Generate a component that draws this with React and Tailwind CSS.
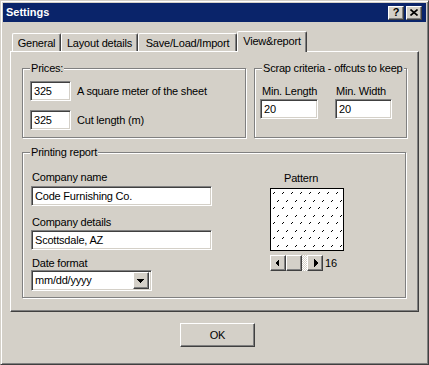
// Settings dialog, View&report tab (Windows 2000 look)

const raised =
  'border border-t-white border-l-white border-r-[#404040] border-b-[#404040] shadow-[inset_-1px_-1px_0_#808080] bg-[#d4d0c8]';
const sunken =
  'border border-t-[#808080] border-l-[#808080] border-r-white border-b-white shadow-[inset_1px_1px_0_#404040,inset_-1px_-1px_0_#d4d0c8] bg-white';
const etched =
  'border border-[#808080] shadow-[inset_1px_1px_0_#fff,1px_1px_0_#fff]';

const TextBox = ({ value, className }) => (
  <div className={`${sunken} h-[20px] flex items-center pl-[3px] ${className}`}>{value}</div>
);

const Arrow = ({ dir }) => (
  <svg width="8" height="8" viewBox="0 0 8 8" shapeRendering="crispEdges" className="block">
    {dir === 'left' && <polygon points="5,0 5,8 1,4" fill="#000" />}
    {dir === 'right' && <polygon points="3,0 3,8 7,4" fill="#000" />}
    {dir === 'down' && <polygon points="0,2 7,2 3.5,6" fill="#000" />}
  </svg>
);

const Tab = ({ label, width }) => (
  <div
    className={`h-[18px] ${width} flex justify-center pt-[3px] border-l border-t border-l-white border-t-white border-r border-r-[#404040] shadow-[inset_-1px_0_0_#808080] rounded-t-[2px] whitespace-nowrap`}
  >
    {label}
  </div>
);

export default function App() {
  return (
    <div className="w-[429px] h-[365px] bg-[#d4d0c8] border border-t-[#d4d0c8] border-l-[#d4d0c8] border-r-[#404040] border-b-[#404040] shadow-[inset_1px_1px_0_#fff,inset_-1px_-1px_0_#808080] p-[2px] flex flex-col font-['Liberation_Sans',Arial,sans-serif] text-[11px] leading-[13px] tracking-[-0.2px] text-black">
      {/* Title bar */}
      <div className="h-[19px] shrink-0 bg-[#0a246a] flex items-center pl-[3px] pr-[4px]">
        <span className="text-white font-bold text-[11px] tracking-normal">Settings</span>
        <div className="ml-auto flex gap-[2px]">
          <div className={`${raised} w-[16px] h-[14px] flex items-center justify-center font-bold text-[11px] leading-none`}>
            ?
          </div>
          <div className={`${raised} w-[16px] h-[14px] flex items-center justify-center`}>
            <svg width="8" height="7" viewBox="0 0 8 7">
              <path d="M0.5 0.5L7.5 6.5M7.5 0.5L0.5 6.5" stroke="#000" strokeWidth="1.6" />
            </svg>
          </div>
        </div>
      </div>

      {/* Tabs */}
      <div className="mt-[9px] h-[20px] shrink-0 flex items-end pl-[9px] relative z-10">
        <Tab label="General" width="w-[49px]" />
        <Tab label="Layout details" width="w-[77px]" />
        <Tab label="Save/Load/Import" width="w-[99px]" />
        <div className="h-[21px] w-[70px] -mb-[1px] bg-[#d4d0c8] flex justify-center pt-[3px] border-l border-t border-l-white border-t-white border-r border-r-[#404040] shadow-[inset_-1px_0_0_#808080] rounded-t-[2px] whitespace-nowrap">
          View&amp;report
        </div>
      </div>

      {/* Tab panel */}
      <div className={`${raised} ml-[7px] w-[409px] h-[261px] shrink-0 pt-[10px] pl-[11px]`}>
        <div className="flex gap-[8px]">
          <fieldset className={`${etched} w-[224px] pl-[7px] pb-[7px]`}>
            <legend className="px-[1px] bg-[#d4d0c8]">Prices:</legend>
            <div className="mt-[6px] flex items-center">
              <TextBox value="325" className="w-[41px]" />
              <span className="ml-[6px]">A square meter of the sheet</span>
            </div>
            <div className="mt-[9px] flex items-center">
              <TextBox value="325" className="w-[41px]" />
              <span className="ml-[6px]">Cut length (m)</span>
            </div>
          </fieldset>

          <fieldset className={`${etched} w-[153px] pl-[5px]`}>
            <legend className="ml-[2px] px-[1px] bg-[#d4d0c8] whitespace-nowrap">
              Scrap criteria - offcuts to keep
            </legend>
            <div className="mt-[10px] flex gap-[17px]">
              <div className="flex flex-col">
                <span className="pl-[2px]">Min. Length</span>
                <TextBox value="20" className="w-[58px] mt-[1px]" />
              </div>
              <div className="flex flex-col">
                <span className="pl-[1px]">Min. Width</span>
                <TextBox value="20" className="w-[57px] mt-[1px]" />
              </div>
            </div>
          </fieldset>
        </div>

        <fieldset className={`${etched} mt-[8px] w-[384px] h-[152px] pl-[8px]`}>
          <legend className="-ml-[1px] px-[1px] bg-[#d4d0c8]">Printing report</legend>
          <div className="flex">
            <div className="w-[181px] flex flex-col">
              <span className="mt-[12px] pl-[1px]">Company name</span>
              <TextBox value="Code Furnishing Co." className="mt-[2px] w-full" />
              <span className="mt-[10px] pl-[1px]">Company details</span>
              <TextBox value="Scottsdale, AZ" className="mt-[1px] w-full" />
              <span className="mt-[7px] pl-[1px]">Date format</span>
              <div className={`${sunken} w-[121px] h-[21px] flex items-center`}>
                <span className="pl-[3px] flex-1">mm/dd/yyyy</span>
                <div className={`${raised} w-[16px] h-[17px] mr-[2px] flex items-center justify-center`}>
                  <Arrow dir="down" />
                </div>
              </div>
            </div>

            <div className="ml-[58px] mt-[13px] flex flex-col">
              <span className="pl-[14px]">Pattern</span>
              <div className="mt-[3px] w-[74px] h-[63px] border border-black bg-white">
                <svg width="72" height="61" className="block" shapeRendering="crispEdges">
                  <defs>
                    <pattern id="hatch" width="9" height="15" patternUnits="userSpaceOnUse">
                      <path d="M1.5 5.5L3.5 3.5M6 13L8 11" stroke="#000" strokeWidth="1" />
                    </pattern>
                  </defs>
                  <rect width="72" height="61" fill="url(#hatch)" />
                </svg>
              </div>
              <div className="mt-[4px] flex items-center">
                <div className={`${raised} w-[16px] h-[16px] flex items-center justify-center`}>
                  <Arrow dir="left" />
                </div>
                <div className={`${raised} w-[16px] h-[16px]`} />
                <div className="w-[5px] h-[16px] bg-[repeating-conic-gradient(#fff_0_25%,#d4d0c8_0_50%)] bg-[length:2px_2px]" />
                <div className={`${raised} w-[16px] h-[16px] flex items-center justify-center`}>
                  <Arrow dir="right" />
                </div>
                <span className="ml-[2px]">16</span>
              </div>
            </div>
          </div>
        </fieldset>
      </div>

      {/* Footer */}
      <div className={`${raised} mt-[11px] ml-[177px] w-[75px] h-[24px] flex items-center justify-center`}>
        OK
      </div>
    </div>
  );
}
